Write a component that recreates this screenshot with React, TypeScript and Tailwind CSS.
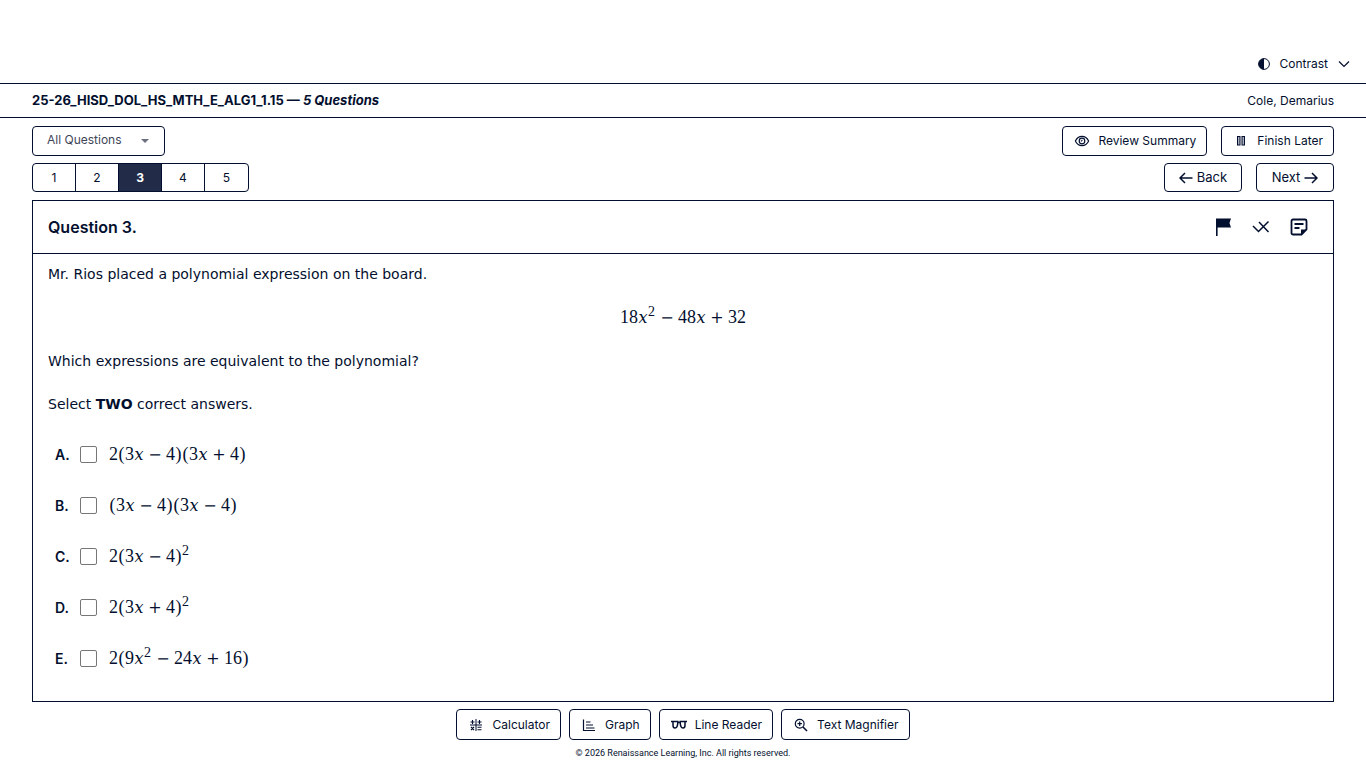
import React, { useState } from 'react';
import clsx from 'clsx';

type IconProps = { className?: string };

// Icons
const ContrastIcon = () => (
  <svg className="h-3 w-3" viewBox="0 0 12 12" aria-hidden="true">
    <circle cx="6" cy="6" r="5.4" fill="none" stroke="currentColor" strokeWidth="1" />
    <path d="M6 .6a5.4 5.4 0 0 0 0 10.8z" fill="currentColor" />
  </svg>
);

const ChevronIcon = () => (
  <svg className="h-3 w-3" viewBox="0 0 12 12" fill="none" stroke="currentColor" strokeWidth="1.2" aria-hidden="true">
    <path d="M1 3.5l5 5 5-5" />
  </svg>
);

const EyeIcon = () => (
  <svg className="h-4 w-4" viewBox="0 0 16 16" fill="none" stroke="currentColor" strokeWidth="1.2" aria-hidden="true">
    <path d="M1.4 8C2.8 5 5.2 3.3 8 3.3S13.2 5 14.6 8C13.2 11 10.8 12.7 8 12.7S2.8 11 1.4 8z" />
    <circle cx="8" cy="8" r="2.8" />
    <path d="M8 6.8v1.2H6.8" strokeWidth="1" />
  </svg>
);

const PauseIcon = () => (
  <svg className="h-4 w-4" viewBox="0 0 16 16" fill="#a9adbb" stroke="currentColor" strokeWidth="1" aria-hidden="true">
    <rect x="4.5" y="3.5" width="2.5" height="8.5" />
    <rect x="9" y="3.5" width="2.5" height="8.5" />
  </svg>
);

const ArrowIcon = ({ className }: IconProps) => (
  <svg className={clsx('h-3.5 w-3.5', className)} viewBox="0 0 14 14" fill="none" stroke="currentColor" strokeWidth="1.5" aria-hidden="true">
    <path d="M.5 7h12M8 2l5 5-5 5" />
  </svg>
);

const FlagIcon = () => (
  <svg className="h-5 w-5" viewBox="0 0 20 20" aria-hidden="true">
    <path d="M3 1.5h15l-1.5 4.5 1.5 4.5H4.6V19H3z" fill="currentColor" />
  </svg>
);

const EliminateIcon = () => (
  <svg className="h-5 w-5" viewBox="0 0 20 20" fill="none" stroke="currentColor" strokeWidth="1.5" aria-hidden="true">
    <path d="M2 9l5.5 5.5L17.500 4.500M8 5l9.500 10" />
  </svg>
);

const NoteIcon = () => (
  <svg className="h-5 w-5" viewBox="0 0 20 20" fill="none" stroke="currentColor" strokeWidth="1.8" aria-hidden="true">
    <path d="M4 2.5h12A1.5 1.5 0 0 1 17.5 4v8.5l-5 5H4A1.5 1.5 0 0 1 2.5 16V4A1.5 1.5 0 0 1 4 2.5z" />
    <path d="M12 18v-5.5h6z" fill="currentColor" stroke="none" />
    <path d="M5.5 7h9M5.5 11h5" />
  </svg>
);

const CalculatorIcon = () => (
  <svg className="h-3.5 w-4" viewBox="0 0 14 14" fill="none" stroke="currentColor" strokeWidth="1.1" aria-hidden="true">
    <path d="M7 1v12M1 7h12" strokeWidth="1" />
    <path d="M1.5 4h4M8.5 4h4M10.5 2v4M3.5 2v4M2 9l3 3M5 9l-3 3M8.5 9.3h4M8.5 11.7h4" />
  </svg>
);

const GraphIcon = () => (
  <svg className="h-3.5 w-4" viewBox="0 0 14 14" fill="none" stroke="currentColor" strokeWidth="1.2" aria-hidden="true">
    <path d="M1.5 1.5v11H13M4 4h4.500M4 7h7M4 10h8.500" />
  </svg>
);

const GlassesIcon = () => (
  <svg className="h-4 w-4" viewBox="0 0 16 16" fill="none" stroke="currentColor" strokeWidth="1.5" aria-hidden="true">
    <path d="M0 4.500h6.800c0 4.300-.9 6.500-2.800 6.500-1.500 0-2-1-2-2.800V4.500M16 4.500H9.200c0 4.300.9 6.500 2.800 6.500 1.500 0 2-1 2-2.800V4.500M6.500 5.500h3" />
  </svg>
);

const MagnifierIcon = () => (
  <svg className="h-3.5 w-4" viewBox="0 0 14 14" fill="none" stroke="currentColor" strokeWidth="1.2" aria-hidden="true">
    <circle cx="5.7" cy="5.7" r="4.4" />
    <path d="M9 9l4 4" strokeWidth="1.6" />
    <path d="M3.500 5.700h4.400M5.700 3.500v4.400" />
  </svg>
);

// Turns a string such as "2x^2-3" into typeset math
const MathText = ({ value }: { value: string }) => (
  <span className="inline-flex items-baseline font-['Liberation_Serif',serif] text-lg leading-6 whitespace-nowrap">
    {(value.match(/\^\d|[-+]|x|[()]|\d+/g) ?? []).map((token, i) => {
      if (token === 'x') {
        return <i key={i} className="w-[10px] text-center font-['DejaVu_Serif',serif] text-base leading-6">x</i>;
      }
      if (token === '-' || token === '+') {
        return (
          <span key={i} className="flex w-[22px] justify-center font-['DejaVu_Serif',serif] text-base leading-6">
            {token === '-' ? '−' : '+'}
          </span>
        );
      }
      if (token[0] === '^') return <sup key={i} className="w-2 text-sm leading-none">{token[1]}</sup>;
      if (token === '(' || token === ')') return <span key={i} className="w-[7px] text-center">{token}</span>;
      return <span key={i}>{token}</span>;
    })}
  </span>
);

const options = [
  { letter: 'A', value: '2(3x-4)(3x+4)' },
  { letter: 'B', value: '(3x-4)(3x-4)' },
  { letter: 'C', value: '2(3x-4)^2' },
  { letter: 'D', value: '2(3x+4)^2' },
  { letter: 'E', value: '2(9x^2-24x+16)' },
];

const tools = [
  { label: 'Calculator', icon: <CalculatorIcon /> },
  { label: 'Graph', icon: <GraphIcon /> },
  { label: 'Line Reader', icon: <GlassesIcon /> },
  { label: 'Text Magnifier', icon: <MagnifierIcon /> },
];

const outlined = 'flex items-center rounded border border-[#030f2e] bg-white';

function App() {
  const [current, setCurrent] = useState(3);

  return (
    <div className="min-h-screen bg-white font-[Inter,sans-serif] text-xs text-[#030f2e]">
      {/* Contrast bar */}
      <header className="flex justify-end border-b border-[#030f2e] px-4 pt-13 pb-[7px]">
        <button type="button" className="flex h-6 items-center gap-[10px]">
          <ContrastIcon />
          Contrast
          <ChevronIcon />
        </button>
      </header>

      {/* Assignment title */}
      <div className="flex h-[34px] items-center justify-between border-b border-[#030f2e] px-8">
        <h1 className="text-[13px] font-bold">
          25-26_HISD_DOL_HS_MTH_E_ALG1_1.15 — <em>5 Questions</em>
        </h1>
        <span>Cole, Demarius</span>
      </div>

      <main className="px-8 pt-2">
        <div className="flex justify-between">
          <div className="relative flex items-center">
            <select
              aria-label="Question filter"
              className="h-[30px] w-[133px] appearance-none rounded border border-[#030f2e] bg-white pr-8 pb-[2px] pl-[14px] text-xs text-[#414659]"
            >
              <option>All Questions</option>
            </select>
            <svg className="pointer-events-none absolute right-4 h-1 w-2 text-[#6b6f80]" viewBox="0 0 8 4" aria-hidden="true">
              <path d="M0 0h8L4 4z" fill="currentColor" />
            </svg>
          </div>
          <div className="flex gap-[14px]">
            <button type="button" className={clsx(outlined, 'h-[30px] gap-2 pr-[10px] pl-[11px]')}>
              <EyeIcon />
              Review Summary
            </button>
            <button type="button" className={clsx(outlined, 'h-[30px] gap-2 pr-[10px] pl-[11px]')}>
              <PauseIcon />
              Finish Later
            </button>
          </div>
        </div>

        <div className="mt-[7px] flex justify-between">
          <nav aria-label="Questions" className="flex h-[29px] overflow-hidden rounded border border-[#030f2e]">
            {[1, 2, 3, 4, 5].map((n) => (
              <button
                key={n}
                type="button"
                onClick={() => setCurrent(n)}
                className={clsx(
                  'w-[43px] border-r border-[#030f2e] last:border-r-0',
                  n === current && 'bg-[#222c49] font-bold text-white'
                )}
              >
                {n}
              </button>
            ))}
          </nav>
          <div className="flex gap-[14px] text-[13px]">
            <button type="button" className={clsx(outlined, 'h-[29px] w-[78px] justify-center gap-1')}>
              <ArrowIcon className="rotate-180" />
              Back
            </button>
            <button type="button" className={clsx(outlined, 'h-[29px] w-[78px] justify-center gap-1')}>
              Next
              <ArrowIcon />
            </button>
          </div>
        </div>

        {/* Question card */}
        <section className="mt-2 border border-[#030f2e]">
          <div className="flex h-[53px] items-center justify-between border-b border-[#030f2e] pr-6 pl-[15px]">
            <h2 className="text-base font-semibold">Question {current}.</h2>
            <div className="flex gap-[18px]">
              <button type="button" aria-label="Flag question"><FlagIcon /></button>
              <button type="button" aria-label="Eliminate answers"><EliminateIcon /></button>
              <button type="button" aria-label="Notes"><NoteIcon /></button>
            </div>
          </div>

          <div className="px-[15px] pt-2 pb-[17px]">
            <div className="flex flex-col gap-[19px] font-['DejaVu_Sans',sans-serif] text-sm leading-6">
              <p>Mr. Rios placed a polynomial expression on the board.</p>
              <p className="flex justify-center"><MathText value="18x^2-48x+32" /></p>
              <p>Which expressions are equivalent to the polynomial?</p>
              <p>Select <strong>TWO</strong> correct answers.</p>
            </div>

            <div className="mt-[13px] pl-[7px]">
              {options.map(({ letter, value }) => (
                <label key={letter} className="flex h-[51px] items-center">
                  <span className="w-[25px] text-sm font-semibold">{letter}.</span>
                  <input
                    type="checkbox"
                    className="mr-3 h-[17px] w-[17px] appearance-none rounded-xs border border-[#767676] bg-white checked:bg-[#222c49]"
                  />
                  <MathText value={value} />
                </label>
              ))}
            </div>
          </div>
        </section>
      </main>

      <footer className="flex flex-col items-center pt-[7px]">
        <div className="flex gap-2">
          {tools.map(({ label, icon }) => (
            <button key={label} type="button" className={clsx(outlined, 'h-[31px] gap-2 pr-[10px] pl-[11px]')}>
              {icon}
              {label}
            </button>
          ))}
        </div>
        <p className="mt-[5px] font-[Roboto,sans-serif] text-[9px] leading-4">
          © 2026 Renaissance Learning, Inc. All rights reserved.
        </p>
      </footer>
    </div>
  );
}

export default App;
